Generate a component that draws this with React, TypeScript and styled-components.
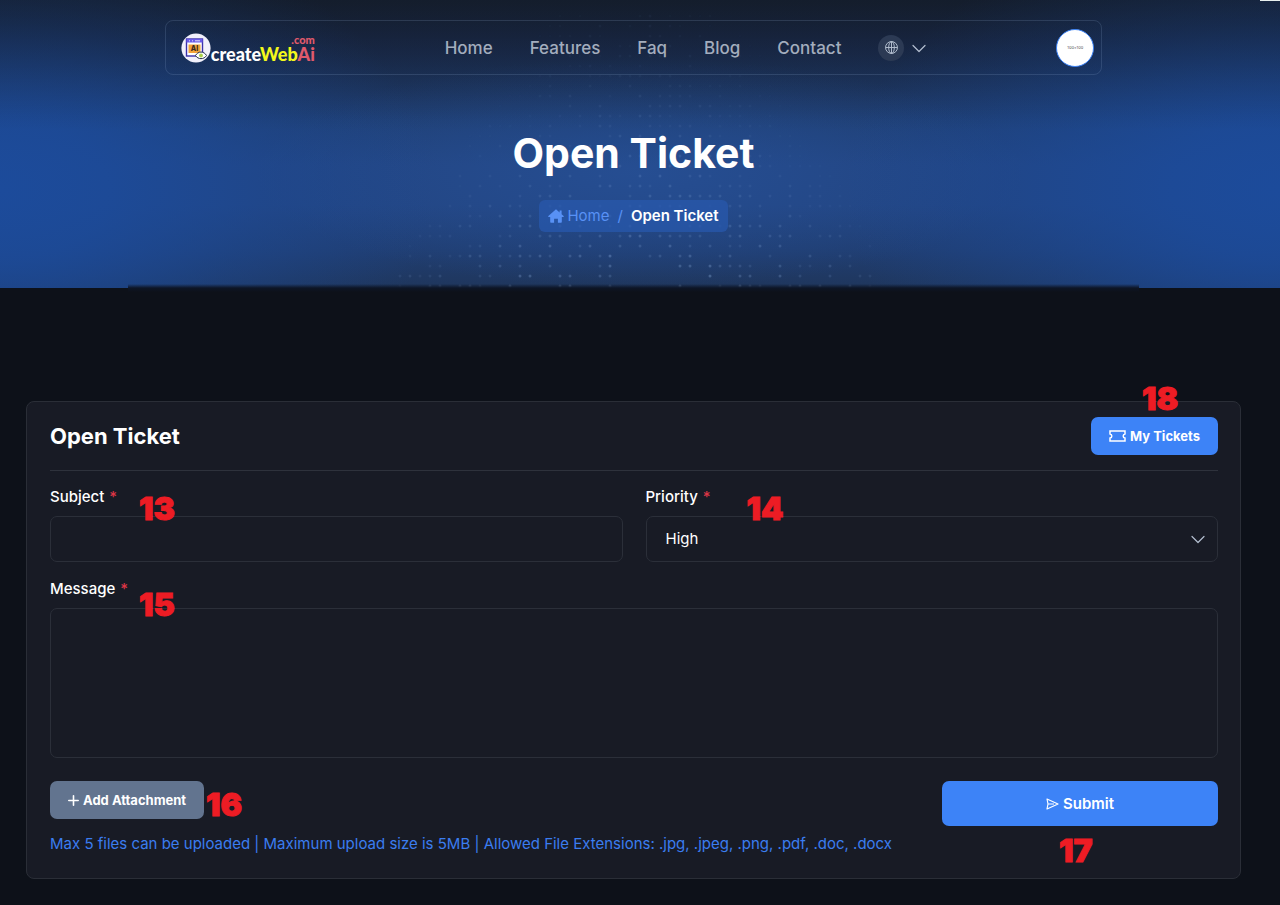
import React from 'react';
import styled, { createGlobalStyle } from 'styled-components';

const GlobalStyle = createGlobalStyle`
  *, *::before, *::after { box-sizing: border-box; }
  body {
    margin: 0;
    background: #0d1119;
    color: #fff;
    font-family: Inter, 'Liberation Sans', sans-serif;
    font-size: 15px;
    line-height: 20px;
  }
  h1, h2, p { margin: 0; }
  a { color: inherit; text-decoration: none; }
  button, input, select, textarea { font: inherit; color: inherit; }
`;

const Hero = styled.header`
  position: relative;
  height: 288px;
  padding: 20px 13px 0 0;
  background:
    linear-gradient(rgba(20, 29, 44, 0.45) 0, rgba(20, 29, 44, 0.25) 60px, rgba(20, 29, 44, 0) 130px),
    radial-gradient(ellipse 34% 96% at 0 66%, #1c4b9b 0%, rgba(28, 75, 155, 0.85) 25%, rgba(28, 75, 155, 0.4) 60%, rgba(28, 75, 155, 0) 100%),
    radial-gradient(ellipse 34% 96% at 100% 66%, #1c4b9b 0%, rgba(28, 75, 155, 0.85) 25%, rgba(28, 75, 155, 0.4) 60%, rgba(28, 75, 155, 0) 100%),
    radial-gradient(ellipse 30% 40% at 50% 60%, rgba(40, 84, 158, 0.6) 0%, rgba(40, 84, 158, 0) 100%),
    linear-gradient(#141d2c 0, #182746 40px, #1c345e 80px, #1f3f74 120px, #224480 165px, #224480 205px, #203e72 250px, #1f365c 288px);
  &::after {
    content: '';
    position: absolute;
    left: 10%;
    right: 11%;
    bottom: -4px;
    height: 8px;
    background: linear-gradient(rgba(13, 17, 25, 0), #0d1526 50%, #0d1119);
  }
`;

const Dots = styled.svg`
  position: absolute;
  top: 0;
  left: 50%;
  margin-left: -250px;
`;

const CornerTab = styled.span`
  position: absolute;
  top: 0;
  right: 0;
  width: 20px;
  height: 1px;
  background: #e8f0ee;
`;

const Nav = styled.nav`
  position: relative;
  display: flex;
  align-items: center;
  justify-content: space-between;
  width: 74%;
  height: 55px;
  margin: 0 auto;
  padding: 0 7px 0 15px;
  border: 1px solid rgba(150, 175, 215, 0.18);
  border-radius: 8px;
`;

const Logo = styled.a`
  display: flex;
  align-items: center;
`;

const LogoWords = styled.span`
  display: flex;
  flex-direction: column;
  align-items: flex-end;
  font-family: Lato, 'Liberation Sans', sans-serif;
  font-weight: 900;
`;

const DotCom = styled.span`
  color: #e05a6c;
  font-size: 11px;
  line-height: 12px;
`;

const Name = styled.span`
  font-size: 18px;
  line-height: 16px;
`;

const Yellow = styled.span`
  color: #f4f81c;
`;

const Rose = styled.span`
  color: #e05a6c;
`;

const NavLinks = styled.div`
  display: flex;
  align-items: center;
  gap: 37px;
  color: #a3adbd;
  font-size: 17px;
  font-weight: 500;
`;

const LangButton = styled.button`
  display: flex;
  align-items: center;
  gap: 8px;
  padding: 0;
  border: 0;
  background: none;
  color: #b4bfd0;
`;

const Globe = styled.span`
  display: grid;
  place-items: center;
  width: 26px;
  height: 26px;
  border-radius: 50%;
  background: #2c3a54;
`;

const Avatar = styled.span`
  display: grid;
  place-items: center;
  width: 38px;
  height: 38px;
  border: 1px solid #3b82f6;
  border-radius: 50%;
  background: #fff;
  color: #555;
  font-size: 4px;
  line-height: 6px;
`;

const HeroTitle = styled.h1`
  position: relative;
  margin-top: 53px;
  font-size: 41px;
  line-height: 50px;
  font-weight: 700;
  text-align: center;
`;

const Crumbs = styled.div`
  position: relative;
  display: flex;
  align-items: center;
  width: fit-content;
  height: 32px;
  margin: 22px auto 0;
  padding: 0 9px;
  gap: 8px;
  border-radius: 6px;
  background: rgba(40, 88, 172, 0.75);
  color: #5891f5;
`;

const CrumbLink = styled.a`
  display: flex;
  align-items: center;
  gap: 3px;
`;

const CrumbCurrent = styled.span`
  color: #fff;
  font-weight: 600;
`;

const Main = styled.main`
  padding: 113px 39px 26px 26px;
`;

const Card = styled.form`
  padding: 15px 22px 24px 23px;
  border: 1px solid #2a2e37;
  border-radius: 8px;
  background: #181b25;
`;

const CardHead = styled.div`
  display: flex;
  align-items: center;
  justify-content: space-between;
  padding-bottom: 15px;
  margin-bottom: 16px;
  border-bottom: 1px solid #2e323c;
`;

const CardTitle = styled.h2`
  font-size: 22px;
  line-height: 28px;
  font-weight: 700;
`;

const Action = styled.button<{ $tone?: 'slate'; $large?: boolean }>`
  display: flex;
  align-items: center;
  justify-content: center;
  gap: 4px;
  width: ${p => (p.$large ? '100%' : 'auto')};
  height: ${p => (p.$large ? 45 : 38)}px;
  padding: 0 18px;
  border: 0;
  border-radius: 7px;
  background: ${p => (p.$tone === 'slate' ? '#62748f' : '#3d83f7')};
  color: #fff;
  font-size: ${p => (p.$large ? 15 : 13)}px;
  font-weight: ${p => (p.$large ? 600 : 700)};
`;

const Anchor = styled.div<{ $width?: number }>`
  position: relative;
  flex: none;
  width: ${p => (p.$width ? `${p.$width}px` : 'auto')};
`;

const Marker = styled.span<{ $x: number; $y: number }>`
  position: absolute;
  left: ${p => p.$x}px;
  top: ${p => p.$y}px;
  color: #ed1c24;
  font: 900 32px/26px Inter, 'Liberation Sans', sans-serif;
  -webkit-text-stroke: 1px #ed1c24;
  pointer-events: none;
`;

const Fields = styled.div`
  display: grid;
  grid-template-columns: 1fr 1fr;
  gap: 17px 23px;
`;

const Field = styled.div<{ $wide?: boolean }>`
  position: relative;
  display: flex;
  flex-direction: column;
  gap: 9px;
  grid-column: ${p => (p.$wide ? '1 / -1' : 'auto')};
`;

const Label = styled.label`
  font-weight: 500;
`;

const Star = styled.span`
  margin-left: 1px;
  color: #dc3545;
`;

const TextInput = styled.input`
  width: 100%;
  height: 46px;
  padding: 0 19px;
  border: 1px solid #2b2f39;
  border-radius: 7px;
  background: transparent;
`;

const SelectWrap = styled.div`
  position: relative;
  svg {
    position: absolute;
    right: 13px;
    top: 16px;
    pointer-events: none;
  }
`;

const Select = styled.select`
  display: block;
  width: 100%;
  height: 46px;
  padding: 0 19px;
  border: 1px solid #2b2f39;
  border-radius: 7px;
  background: #181b25;
  appearance: none;
`;

const TextArea = styled.textarea`
  display: block;
  width: 100%;
  height: 150px;
  padding: 12px 19px;
  border: 1px solid #2b2f39;
  border-radius: 7px;
  background: transparent;
  resize: none;
`;

const Footer = styled.div`
  display: flex;
  align-items: flex-start;
  justify-content: space-between;
  gap: 23px;
  margin-top: 23px;
`;

const Uploads = styled.div`
  display: flex;
  flex-direction: column;
  align-items: flex-start;
  gap: 15px;
`;

const Hint = styled.p`
  color: #3b7df0;
`;

const dots: { x: number; y: number; o: number }[] = [];
for (let row = 0; row < 28; row++) {
  for (let col = 0; col < 48; col++) {
    const noise = Math.abs(Math.sin(row * 127.1 + col * 311.7) * 43758.5453) % 1;
    const reach = 1 - Math.abs(col - 24) / (10 + row * 0.6);
    if (reach > 0 && noise < 0.45) {
      dots.push({ x: 10 + col * 10, y: 16 + row * 10, o: Math.sqrt(reach) * (0.08 + (row / 28) ** 2 * 0.55) * (0.3 + noise) });
    }
  }
}

const LogoMark = () => (
  <svg width="30" height="30" viewBox="0 0 30 30" aria-hidden="true">
    <circle cx="15" cy="15" r="14.6" fill="#f1f0fb" />
    <rect x="5.5" y="6" width="16" height="17" fill="#fff" stroke="#3a2fa8" strokeWidth="1.4" />
    <rect x="5.5" y="6" width="16" height="3.5" fill="#6a5be8" />
    <path d="M8 7.8h1M11 7.8h1M14 7.8h5" stroke="#fff" strokeWidth="0.8" />
    <rect x="7.5" y="11.5" width="12" height="8.5" fill="#f2a33a" />
    <text x="13.500" y="18.400" textAnchor="middle" fontFamily="Inter, sans-serif" fontSize="7" fontWeight="800" fill="#3a2a22">AI</text>
    <path d="M14.500 22.500c2.500-4.600 8.500-4.600 11 0c-2.500 4.200-8.500 4.200-11 0z" fill="#fff" stroke="#27324a" strokeWidth="1" />
    <circle cx="20" cy="22.500" r="1.900" fill="#a7cf4a" />
  </svg>
);

const Chevron = () => (
  <svg width="14" height="14" viewBox="0 0 14 14" fill="none" stroke="#b4bfd0" strokeWidth="1.200" strokeLinecap="round" strokeLinejoin="round" aria-hidden="true">
    <path d="M1 4.500l6 6 6-6" />
  </svg>
);

export default function App() {
  return (
    <>
      <GlobalStyle />
      <Hero>
        <Dots width="490" height="288" aria-hidden="true">
          {dots.map((d, i) => (
            <circle key={i} cx={d.x} cy={d.y} r="1.500" fill="#8fb0e0" opacity={d.o} />
          ))}
        </Dots>
        <CornerTab />
        <Nav>
          <Logo href="#" aria-label="createWebAi.com">
            <LogoMark />
            <LogoWords>
              <DotCom>.com</DotCom>
              <Name>create<Yellow>Web</Yellow><Rose>Ai</Rose></Name>
            </LogoWords>
          </Logo>
          <NavLinks>
            <a href="#">Home</a>
            <a href="#">Features</a>
            <a href="#">Faq</a>
            <a href="#">Blog</a>
            <a href="#">Contact</a>
            <LangButton type="button" aria-label="Language">
              <Globe>
                <svg width="13" height="13" viewBox="0 0 12 12" fill="none" stroke="currentColor" strokeWidth="0.900">
                  <circle cx="6" cy="6" r="5.500" />
                  <ellipse cx="6" cy="6" rx="2.600" ry="5.500" />
                  <path d="M6 .5v11M.5 6h11" />
                </svg>
              </Globe>
              <Chevron />
            </LangButton>
          </NavLinks>
          <Avatar>100x100</Avatar>
        </Nav>
        <HeroTitle>Open Ticket</HeroTitle>
        <Crumbs>
          <CrumbLink href="#">
            <svg width="16" height="14" viewBox="0 0 16 14" fill="currentColor" aria-hidden="true">
              <path d="M8 .3L.4 7c-.4.500-.1 1 .5 1h1.300v4.800c0 .6.4 1 1 1h2.900V9.700h3.800v4.100h2.900c.6 0 1-.4 1-1V8h1.300c.6 0 .9-.5.5-1l-2-1.800V1.500h-2v1.900z" />
            </svg>
            Home
          </CrumbLink>
          <span>/</span>
          <CrumbCurrent>Open Ticket</CrumbCurrent>
        </Crumbs>
      </Hero>
      <Main>
        <Card onSubmit={e => e.preventDefault()}>
          <CardHead>
            <CardTitle>Open Ticket</CardTitle>
            <Anchor>
              <Action type="button">
                <svg width="17" height="12" viewBox="0 0 17 12" fill="none" stroke="currentColor" strokeWidth="1.500" aria-hidden="true">
                  <path d="M1 1h15v2.900c-2.400.4-2.400 3.800 0 4.200V11H1V8.100c2.400-.4 2.400-3.800 0-4.200z" />
                </svg>
                My Tickets
              </Action>
              <Marker $x={51} $y={-31}>18</Marker>
            </Anchor>
          </CardHead>
          <Fields>
            <Field>
              <Label htmlFor="subject">Subject <Star>*</Star></Label>
              <TextInput id="subject" type="text" />
              <Marker $x={89} $y={9}>13</Marker>
            </Field>
            <Field>
              <Label htmlFor="priority">Priority <Star>*</Star></Label>
              <SelectWrap>
                <Select id="priority" defaultValue="High">
                  <option>High</option>
                  <option>Medium</option>
                  <option>Low</option>
                </Select>
                <Chevron />
              </SelectWrap>
              <Marker $x={101} $y={9}>14</Marker>
            </Field>
            <Field $wide>
              <Label htmlFor="message">Message <Star>*</Star></Label>
              <TextArea id="message" />
              <Marker $x={89} $y={13}>15</Marker>
            </Field>
          </Fields>
          <Footer>
            <Uploads>
              <Anchor>
                <Action type="button" $tone="slate">
                  <svg width="11" height="11" viewBox="0 0 11 11" stroke="currentColor" strokeWidth="1.600" strokeLinecap="round" aria-hidden="true">
                    <path d="M5.500.8v9.400M.8 5.500h9.400" />
                  </svg>
                  Add Attachment
                </Action>
                <Marker $x={156} $y={11}>16</Marker>
              </Anchor>
              <Hint>Max 5 files can be uploaded | Maximum upload size is 5MB | Allowed File Extensions: .jpg, .jpeg, .png, .pdf, .doc, .docx</Hint>
            </Uploads>
            <Anchor $width={276}>
              <Action type="submit" $large>
                <svg width="13" height="12" viewBox="0 0 13 12" fill="none" stroke="currentColor" strokeWidth="1.200" strokeLinejoin="round" aria-hidden="true">
                  <path d="M1 1l11 5L1 11l1-5zM2 6h6" />
                </svg>
                Submit
              </Action>
              <Marker $x={117} $y={57}>17</Marker>
            </Anchor>
          </Footer>
        </Card>
      </Main>
    </>
  );
}
